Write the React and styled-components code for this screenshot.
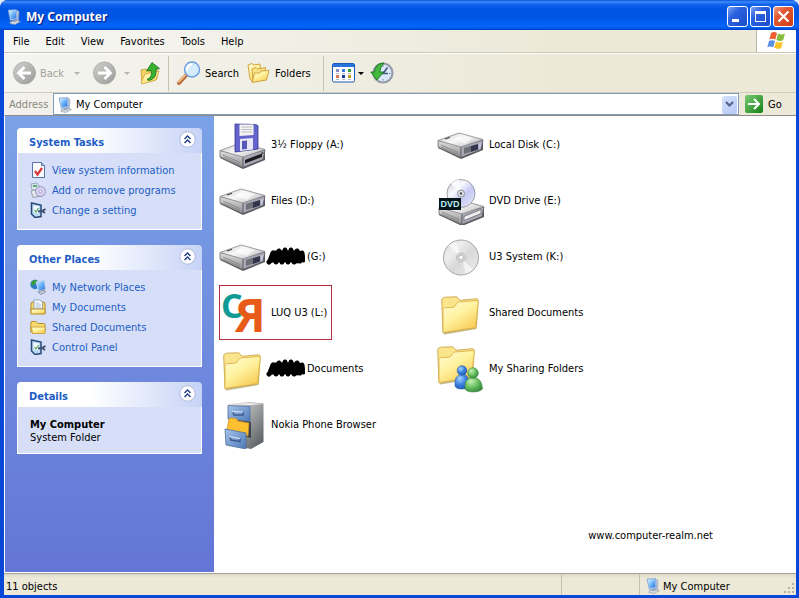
import React from "react";
import styled, { createGlobalStyle } from "styled-components";

const GlobalStyle = createGlobalStyle`
  * {
    box-sizing: border-box;
  }
  body {
    margin: 0;
    background: #e4ecf8;
    color: #000;
    font-family: "DejaVu Sans Condensed", "Noto Sans", Tahoma, sans-serif;
    font-size: 11px;
    line-height: 13px;
  }
  button, input {
    font: inherit;
    color: inherit;
    border: 0;
    padding: 0;
    margin: 0;
    background: none;
  }
  svg {
    display: block;
    flex: none;
  }
`;

const Window = styled.div`
  display: flex;
  flex-direction: column;
  min-height: 100vh;
  background: #0848d8;
  border-radius: 8px 8px 0 0;
  overflow: hidden;
`;

const TitleBar = styled.header`
  display: flex;
  align-items: center;
  gap: 4px;
  height: 30px;
  padding: 3px 5px 0 6px;
  background: linear-gradient(
    #0a52d8 0%,
    #3c8cf8 6%,
    #1264ee 14%,
    #0054e2 30%,
    #0056e6 60%,
    #0464fa 86%,
    #0260f4 92%,
    #0040c0 100%
  );
`;

const Title = styled.h1`
  flex: 1;
  margin: 0;
  color: #fff;
  font-family: "Noto Sans", sans-serif;
  font-size: 12px;
  line-height: 18px;
  font-weight: 700;
  text-shadow: 1px 1px 1px #0a1883;
`;

const WindowButtons = styled.div`
  display: flex;
  gap: 2px;
`;

const WindowButton = styled.button`
  width: 21px;
  height: 21px;
  border: 1px solid #fff;
  border-radius: 3px;
  background: ${({ $close }) =>
    $close
      ? "linear-gradient(135deg, #f0a088, #e25a34 35%, #cc3c14)"
      : "linear-gradient(135deg, #7ca4f4, #2c62e0 35%, #1a4cc8)"};
`;

const Frame = styled.div`
  flex: 1;
  display: flex;
  flex-direction: column;
  margin: 0 3px 3px 4px;
  background: #ece9d8;
`;

const MenuBar = styled.nav`
  display: flex;
  height: 23px;
  border-bottom: 1px solid #c9c6b6;
  background: linear-gradient(90deg, #f6f6f4, #ece9d8 70%);
`;

const MenuItem = styled.button`
  padding: 0 8px;
  &:first-child {
    padding-left: 9px;
  }
`;

const Flag = styled.div`
  display: flex;
  align-items: center;
  justify-content: center;
  width: 40px;
  margin-left: auto;
  border-left: 1px solid #b8b5a4;
  background: #fff;
`;

const ToolBar = styled.div`
  display: flex;
  align-items: center;
  height: 40px;
  padding-left: 8px;
  border-top: 1px solid #fff;
  border-bottom: 1px solid #cfccbc;
  background: linear-gradient(90deg, #f4f4f0, #ece9d8 70%);
`;

const ToolButton = styled.button`
  display: flex;
  align-items: center;
  gap: 4px;
  padding-right: ${({ $pad }) => $pad || 0}px;
  color: ${({ disabled }) => (disabled ? "#a3a19a" : "#000")};
`;

const Arrow = styled.span`
  border: 3px solid transparent;
  border-top-color: ${({ $dim }) => ($dim ? "#b6b4aa" : "#000")};
  border-bottom: 0;
  margin-left: ${({ $gap }) => $gap || 4}px;
`;

const Divider = styled.span`
  width: 1px;
  height: 35px;
  margin: 0 8px 0 6px;
  background: #c5c2b2;
`;

const AddressBar = styled.div`
  display: flex;
  align-items: center;
  height: 22px;
  padding-left: 5px;
  background: linear-gradient(90deg, #f2f1ec, #ece9d8 70%);
`;

const AddressLabel = styled.label`
  width: 44px;
  color: #8a887c;
`;

const AddressField = styled.div`
  flex: 1;
  display: flex;
  align-items: center;
  gap: 3px;
  height: 22px;
  padding: 1px 1px 0 3px;
  border: 1px solid #7f9db9;
  background: #fff;
`;

const AddressInput = styled.input`
  flex: 1;
  min-width: 0;
  outline: 0;
`;

const DropButton = styled.button`
  display: flex;
  align-items: center;
  justify-content: center;
  width: 15px;
  height: 18px;
  border-radius: 2px;
  background: linear-gradient(135deg, #d6e2fc, #b4c8f4);
`;

const GoButton = styled.button`
  display: flex;
  align-items: center;
  gap: 5px;
  width: 57px;
  padding-left: 6px;
`;

const Content = styled.div`
  flex: 1;
  display: flex;
  border-top: 1px solid #8c8b85;
  border-left: 1px solid #fff;
  border-bottom: 1px solid #fff;
  background: #fff;
`;

const Sidebar = styled.aside`
  display: flex;
  flex-direction: column;
  gap: 15px;
  width: 209px;
  padding: 12px;
  background: linear-gradient(#7ba2e7, #6375d6);
`;

const PanelHead = styled.div`
  display: flex;
  align-items: center;
  justify-content: space-between;
  height: 25px;
  padding: 0 6px 0 12px;
  border-radius: 4px 4px 0 0;
  background: linear-gradient(90deg, #fff 40%, #c6d3f7);
`;

const PanelTitle = styled.h2`
  margin: 3px 0 0;
  color: #215dc6;
  font-size: 11px;
  font-weight: 700;
`;

const PanelToggle = styled.button`
  margin-bottom: 2px;
`;

const PanelBody = styled.div`
  padding: ${({ $text }) => ($text ? "11px 12px 9px" : "7px 12px 9px")};
  border: 1px solid #fff;
  border-top: 0;
  background: #d6dff7;
`;

const TaskLink = styled.a`
  display: flex;
  align-items: center;
  gap: 6px;
  height: 20px;
  color: #215dc6;
  text-decoration: none;
`;

const Files = styled.main`
  flex: 1;
  display: flex;
  flex-direction: column;
  padding-left: 5px;
`;

const Grid = styled.div`
  display: grid;
  grid-template-columns: repeat(auto-fill, 218px);
  grid-auto-rows: 56px;
  max-width: 436px;
  align-items: center;
`;

const Item = styled.div`
  display: flex;
  align-items: center;
  justify-self: start;
  gap: 4px;
  height: 55px;
  padding: 1px 4px 0 0;
  border: 1px solid ${({ $marked }) => ($marked ? "#b42c3c" : "transparent")};
  border-left-width: 0;
  box-shadow: ${({ $marked }) => ($marked ? "inset 1px 0 #b42c3c" : "none")};
`;

const ItemName = styled.span`
  display: flex;
  align-items: center;
  gap: 2px;
  margin-left: ${({ $masked }) => ($masked ? "-6px" : "0")};
`;

const Site = styled.p`
  align-self: flex-end;
  margin: auto 83px 30px 0;
`;

const StatusBar = styled.footer`
  display: flex;
  height: 22px;
  border-top: 1px solid #a5a395;
  background: linear-gradient(#dcd9c9, #ece9d8 4px);
`;

const StatusCell = styled.div`
  display: flex;
  align-items: center;
  gap: 2px;
  flex: ${({ $width }) => ($width ? `0 0 ${$width}px` : 1)};
  padding-top: 3px;
  padding-left: ${({ $width }) => ($width ? 5 : 2)}px;
  border-left: ${({ $width }) => ($width ? "1px solid #c5c2b2" : "0")};
`;

const Grip = styled.svg`
  margin: auto 1px 1px auto;
`;

const HiddenDefs = styled.svg`
  position: absolute;
`;

const LogoSvg = styled.svg`
  overflow: visible;
  font-family: "Open Sans", sans-serif;
  font-weight: 700;
`;

const Defs = () => (
  <HiddenDefs width="0" height="0" aria-hidden="true">
    <defs>
      <linearGradient id="folder" x1="0" y1="0" x2="0.7" y2="1">
        <stop offset="0" stopColor="#fffcd8" />
        <stop offset="0.5" stopColor="#fff2a0" />
        <stop offset="1" stopColor="#f8cc54" />
      </linearGradient>
      <linearGradient id="metal" x1="0" y1="0" x2="1" y2="0.6">
        <stop offset="0" stopColor="#c4c4c4" />
        <stop offset="0.5" stopColor="#f8f8f8" />
        <stop offset="1" stopColor="#c8c8cc" />
      </linearGradient>
      <linearGradient id="side" x1="0" y1="0" x2="0" y2="1">
        <stop offset="0" stopColor="#e0e0e0" />
        <stop offset="1" stopColor="#8e8e90" />
      </linearGradient>
      <linearGradient id="screen" x1="0" y1="0" x2="1" y2="1">
        <stop offset="0" stopColor="#d8f0ff" />
        <stop offset="0.5" stopColor="#6cb4f8" />
        <stop offset="1" stopColor="#2468d8" />
      </linearGradient>
      <linearGradient id="disc" x1="0" y1="0" x2="1" y2="1">
        <stop offset="0" stopColor="#cfd0d8" />
        <stop offset="0.35" stopColor="#f8f8ff" />
        <stop offset="0.6" stopColor="#c4c8f4" />
        <stop offset="1" stopColor="#ececf4" />
      </linearGradient>
      <linearGradient id="silver" x1="0" y1="0" x2="1" y2="1">
        <stop offset="0" stopColor="#d8d8d8" />
        <stop offset="0.3" stopColor="#eeeeee" />
        <stop offset="0.55" stopColor="#d8d8d8" />
        <stop offset="1" stopColor="#f0f0f0" />
      </linearGradient>
      <linearGradient id="drawer" x1="0" y1="0" x2="1" y2="1">
        <stop offset="0" stopColor="#a8c4ea" />
        <stop offset="1" stopColor="#4c78b8" />
      </linearGradient>
      <linearGradient id="tower" x1="0" y1="0" x2="1" y2="1">
        <stop offset="0" stopColor="#e8e8e8" />
        <stop offset="1" stopColor="#505458" />
      </linearGradient>
      <linearGradient id="round" x1="0" y1="0" x2="1" y2="1">
        <stop offset="0" stopColor="#d0d0ce" />
        <stop offset="1" stopColor="#9a9a98" />
      </linearGradient>
      <linearGradient id="green" x1="0" y1="0" x2="1" y2="1">
        <stop offset="0" stopColor="#7ccc74" />
        <stop offset="1" stopColor="#128018" />
      </linearGradient>
      <radialGradient id="blueMan" cx="0.35" cy="0.3" r="0.8">
        <stop offset="0" stopColor="#a8d4ff" />
        <stop offset="0.5" stopColor="#3c84e0" />
        <stop offset="1" stopColor="#1a50b0" />
      </radialGradient>
      <radialGradient id="greenMan" cx="0.35" cy="0.3" r="0.8">
        <stop offset="0" stopColor="#c8f0b8" />
        <stop offset="0.5" stopColor="#68c060" />
        <stop offset="1" stopColor="#308038" />
      </radialGradient>
    </defs>
  </HiddenDefs>
);

const ComputerIcon = () => (
  <svg width="16" height="16" viewBox="0 0 16 16">
    <path d="M4 13l6-2 4.500 1.500-5.500 3-5-1z" fill="#d4d8e0" stroke="#8c94a4" strokeWidth="0.6" />
    <path d="M10 1l3 1.200-0.500 9-2 1z" fill="#c4ccdc" stroke="#8090b0" strokeWidth="0.5" />
    <path d="M2 1l8.500-0.500 0.800 9.500-7 1.500z" fill="#b8d4f4" stroke="#6890cc" strokeWidth="0.6" />
    <path d="M3 2l6.700-0.400 0.700 7.400-5.400 1.200z" fill="url(#screen)" />
    <path d="M6.500 11.500l3-0.500 0.600 2H7z" fill="#98a4b8" />
  </svg>
);

const FlagIcon = () => (
  <svg width="22" height="20" viewBox="0 0 22 20">
    <path d="M5 2q3-2 6 0l-1.6 6.6q-3-1.600-6 0z" fill="#ee6030" />
    <path d="M12 2.500q3.500 2 7 0l-1.800 6.600q-3.500 1.800-6.800-0.200z" fill="#84bc3c" />
    <path d="M3 10q3-1.600 6 0l-1.700 6.300q-3-1.800-6 0z" fill="#5a90e4" />
    <path d="M10 10.400q3.400 2 6.900 0.200l-1.700 6.400q-3.500 1.800-6.900-0.200z" fill="#f8c428" />
  </svg>
);

const RoundArrow = ({ flip }) => (
  <svg width="24" height="24" viewBox="0 0 24 24">
    <circle cx="12.500" cy="12" r="11" fill="url(#round)" stroke="#a4a4a2" strokeWidth="0.800" />
    <path
      d={flip ? "M6 12h12M12.500 6l6 6-6 6" : "M19 12H7M12.500 6L6.500 12l6 6"}
      fill="none"
      stroke="#fff"
      strokeWidth="2.800"
    />
  </svg>
);

const UpIcon = () => (
  <svg width="22" height="24" viewBox="0 0 22 24">
    <path d="M1 9l5-1 2 2 9-2v10L2 22z" fill="#f4d468" stroke="#c89828" strokeWidth="0.800" />
    <path d="M1 22l4-9 14-3-3 9-14 4z" fill="url(#folder)" stroke="#d0a030" strokeWidth="0.800" />
    <path
      d="M7 18.500q6-2.500 4-9l-4.500 0.500L12 1.500l7.500 6-3.500 0.800q1 9.500-7 11.200z"
      fill="#38b030"
      stroke="#14701a"
      strokeWidth="0.800"
    />
  </svg>
);

const SearchIcon = () => (
  <svg width="24" height="24" viewBox="0 0 24 24">
    <path d="M2 22l7-7.500" stroke="#b86c38" strokeWidth="4" strokeLinecap="round" />
    <path d="M1.800 20.800l6.600-7" stroke="#f8b888" strokeWidth="1.800" strokeLinecap="round" />
    <circle cx="15" cy="8.500" r="7.500" fill="#d4ecfc" stroke="#6c9ce0" strokeWidth="1.400" />
    <path d="M10 9a5 5 0 0 1 5-5.500" stroke="#fff" strokeWidth="2.400" fill="none" />
  </svg>
);

const FoldersIcon = () => (
  <svg width="24" height="22" viewBox="0 0 24 22">
    <path d="M1 3l4-1.500 2 1.500 6-1 1 11-9 6-2-2z" fill="url(#folder)" stroke="#cc9c30" strokeWidth="0.900" />
    <path d="M5 7l4-1.500 1.500 1.500 8-1.500-1 10L6 20z" fill="#fbe488" stroke="#cc9c30" strokeWidth="0.900" />
    <path d="M5 20.500l2.500-9.500 5 0 1.500-2 8-0.500-2.500 9.500z" fill="url(#folder)" stroke="#cc9c30" strokeWidth="0.900" />
  </svg>
);

const ViewsIcon = () => (
  <svg width="24" height="20" viewBox="0 0 24 20">
    <rect x="0.500" y="0.500" width="22" height="18.500" rx="1.500" fill="#fff" stroke="#1c5cb8" />
    <path d="M1 1h21v3H1z" fill="#2874dc" />
    <path d="M4 6h3v3H4z" fill="#8c8cc4" />
    <path d="M10 6h3v3h-3z" fill="#3c78dc" />
    <path d="M16 6h3v3h-3z" fill="#30a030" />
    <path d="M4 12h3v3H4z" fill="#e07858" />
    <path d="M10 12h3v3h-3z" fill="#1c389c" />
    <path d="M16 12h3v3h-3z" fill="#c8a020" />
    <path d="M4 10.500h3m3 0h3m3 0h3M4 16.500h3m3 0h3m3 0h3" stroke="#a4acbc" strokeWidth="0.800" />
  </svg>
);

const HistoryIcon = () => (
  <svg width="24" height="24" viewBox="0 0 24 24">
    <circle cx="13" cy="12" r="9.500" fill="#dce8f8" stroke="#949ca8" strokeWidth="2.200" />
    <path d="M13 12.500l4.500-6M12 12.500h6" stroke="#40587c" strokeWidth="1.600" />
    <path d="M13 4.500V6M13 18v1.500M19 12.500h1.500" stroke="#6c84a8" />
    <path
      d="M14 2Q5 2.500 4.500 11H0.800l6 8 7-8h-4Q10 6 14 2z"
      fill="#44b83c"
      stroke="#187020"
      strokeWidth="0.900"
    />
  </svg>
);

const GoIcon = () => (
  <svg width="18" height="18" viewBox="0 0 18 18">
    <rect width="18" height="18" rx="2" fill="url(#green)" />
    <path d="M3 9h10M9 4l5 5-5 5" fill="none" stroke="#fff" strokeWidth="2" />
  </svg>
);

const CollapseIcon = () => (
  <svg width="17" height="17" viewBox="0 0 17 17">
    <circle cx="8.500" cy="8.500" r="7.700" fill="#fff" stroke="#b0b8d8" />
    <path d="M5.500 8l3-3 3 3M5.500 12l3-3 3 3" fill="none" stroke="#1c3c80" strokeWidth="1.400" />
  </svg>
);

const InfoIcon = () => (
  <svg width="16" height="16" viewBox="0 0 16 16">
    <path d="M2.500 0.500h9l3 3v12h-12z" fill="#f8fafe" stroke="#5874a4" />
    <path d="M11.500 0.500v3h3" fill="#b8c8e4" stroke="#5874a4" />
    <path d="M5 9l2.500 3.500L12 6" fill="none" stroke="#dc3838" strokeWidth="2.200" />
  </svg>
);

const ProgramsIcon = () => (
  <svg width="16" height="16" viewBox="0 0 16 16">
    <path d="M1 2l6-1 2 3v4H2z" fill="#dce8f0" stroke="#8098b0" strokeWidth="0.800" />
    <path d="M3 3h4v2H3z" fill="#58a870" />
    <path d="M1 9l8-2 2 7-8 1.500z" fill="#e4e8e8" stroke="#88909c" strokeWidth="0.800" />
    <circle cx="10.500" cy="9.500" r="5" fill="#d8d0f0" stroke="#8c84b8" strokeWidth="0.800" />
    <circle cx="10.500" cy="9.500" r="1.400" fill="#fff" stroke="#8c84b8" strokeWidth="0.700" />
  </svg>
);

const SettingIcon = () => (
  <svg width="16" height="16" viewBox="0 0 16 16">
    <path d="M1.500 1l9.500 2v11.500L5 15.500 1.500 12z" fill="#b8d8f4" stroke="#284878" strokeWidth="1.500" />
    <path d="M3.500 3.500l5.500 1v7l-5.500-1z" fill="#f4fafe" />
    <path d="M4.500 8l1.500 2 2.500-4" stroke="#58a858" strokeWidth="1.200" fill="none" />
    <path d="M8 9.500l4-0.500 3.500-2M12 9l3 2" stroke="#405070" strokeWidth="2" fill="none" />
  </svg>
);

const NetworkIcon = () => (
  <svg width="16" height="16" viewBox="0 0 16 16">
    <circle cx="5" cy="5.500" r="4.700" fill="#2c7cc8" />
    <path d="M1 4q3-4.500 6-3l-2 4-3 2z" fill="#38a034" />
    <path d="M6 3l8.500-1.500 1 9-7 1.500z" fill="url(#screen)" stroke="#c4d4ec" strokeWidth="0.900" />
    <path d="M8 13l6-2 1.500 2-4.500 2.500z" fill="#c8ccd8" stroke="#707888" strokeWidth="0.700" />
  </svg>
);

const DocsIcon = () => (
  <svg width="16" height="16" viewBox="0 0 16 16">
    <path d="M1 5q0-2 2-2h10q2 0 2 2v9H1z" fill="#f8d868" stroke="#b88c28" />
    <path d="M4 1h6l2.500 2.500V10H4z" fill="#fff" stroke="#7890b8" strokeWidth="0.800" />
    <path d="M5.500 4h4m-4 2h5.500m-5.500 2h5.500" stroke="#88a4cc" strokeWidth="0.800" />
    <path d="M1 10h14v5H1z" fill="url(#folder)" stroke="#b88c28" />
  </svg>
);

const SmallFolderIcon = () => (
  <svg width="16" height="16" viewBox="0 0 16 16">
    <path d="M0.800 13V4q0-1.500 1.200-1.500h4l2 2h5.500q1.500 0 1.500 1.500v7z" fill="#f8dc70" stroke="#b88c28" />
    <path d="M2.500 14.500L1.500 8h13.500v6.500z" fill="url(#folder)" stroke="#c89830" strokeWidth="0.800" />
  </svg>
);

const DriveBody = () => (
  <g>
    <path d="M1 20v7l23 11 22-9v-8z" fill="#58585c" />
    <path d="M1 19.500v6.500l23 10.500V25z" fill="url(#side)" stroke="#707074" strokeWidth="0.800" />
    <path d="M24 25v11.500l20-8 2-9.500z" fill="#a8a8b4" stroke="#5c5c64" strokeWidth="0.800" />
    <path d="M1 19.500L22 12l24 6.500L24 26z" fill="url(#metal)" stroke="#88888c" strokeWidth="0.800" />
    <path d="M4 24l17 7.500M4 26l17 7.500" stroke="#78787c" strokeWidth="0.700" />
  </g>
);

const DriveIcon = () => (
  <svg width="48" height="48" viewBox="0 0 48 48">
    <DriveBody />
    <path d="M16 18q9-4 20-1l-8 6z" fill="#fff" opacity="0.600" />
    <path d="M8 18l5-1.800" stroke="#48484c" strokeWidth="1.200" />
    <path d="M27 27l7-2.200v6L27 33z" fill="#707078" />
    <path d="M34 25l7-2v5.500L34 31z" fill="#34344c" />
    <path d="M42 22.500l2.500-1-1 6-1.500 0.500z" fill="#c4c4e4" />
  </svg>
);

const FloppyIcon = () => (
  <svg width="48" height="48" viewBox="0 0 48 48">
    <g transform="translate(0 10)">
      <DriveBody />
      <path d="M26 29l17-6.500v3.500l-17 6.500z" fill="#1c1c20" />
      <circle cx="43.500" cy="22" r="1" fill="#444" />
    </g>
    <path d="M16 3l21.500 0.500 1.500 1.500v23l-23 3z" fill="#6464cc" stroke="#34348c" strokeWidth="0.800" />
    <path d="M20.500 3.500h14v10.500l-14 1z" fill="#f4f4f4" />
    <path d="M22.500 6h10.500m-10.500 2.500h10.500m-10.500 2.500h10.500" stroke="#b4b4bc" strokeWidth="0.900" />
    <path d="M21 18l13-1v11.500L21 30z" fill="#e8e8f8" />
    <path d="M23 20l5-0.500v8.500l-5 0.500z" fill="#5858b8" />
  </svg>
);

const DvdIcon = () => (
  <svg width="48" height="48" viewBox="0 0 48 48">
    <g transform="translate(1 11)">
      <DriveBody />
      <path d="M26 28.500l17-7v4l-17 7z" fill="#f0f0f0" stroke="#606064" strokeWidth="0.700" />
    </g>
    <circle cx="24" cy="16.500" r="14" fill="url(#disc)" stroke="#8c8c94" strokeWidth="0.800" />
    <path d="M24 16.500L14 6.500a14 14 0 0 1 8-4z" fill="#fff" opacity="0.800" />
    <circle cx="24" cy="16.500" r="3.500" fill="#e4e4e8" stroke="#7c7c84" strokeWidth="0.800" />
    <circle cx="24" cy="16.500" r="1.300" fill="#505058" />
    <rect x="2" y="21" width="22" height="12" fill="#041418" />
    <text x="13" y="30" textAnchor="middle" fontSize="9" fontWeight="700" fill="#b4ecf0" fontFamily="Liberation Sans, sans-serif">
      DVD
    </text>
  </svg>
);

const DiscIcon = () => (
  <svg width="48" height="48" viewBox="0 0 48 48">
    <circle cx="24" cy="24.500" r="17.500" fill="url(#silver)" stroke="#a4a4a4" />
    <path d="M24 24.500L12 12.500a17 17 0 0 1 7-4zM24 24.500l12 12a17 17 0 0 1-7 4z" fill="#fff" opacity="0.600" />
    <circle cx="24" cy="24.500" r="4.500" fill="#d8d8d8" stroke="#bcbcbc" />
    <circle cx="24" cy="24.500" r="2.300" fill="#fff" stroke="#a4a4a4" strokeWidth="0.800" />
  </svg>
);

const FolderShape = () => (
  <g>
    <path d="M6 44l1.500 1.500L39.500 40 42 14l-2 24z" fill="#a89858" opacity="0.700" />
    <path d="M6 43.500L4.700 11q0-1.500 1.300-2l1.500-0.800 11.500-0.400q1.200 0 2 1l2 2.500 16.500-1.600q1.800 0 1.700 2l-2 27z" fill="#fae48c" stroke="#cca850" strokeWidth="0.900" />
    <path d="M6 43.500l0-23q0-1.500 1.500-1.700l8.500-0.600q1.200 0 2-1.200l2-3q0.600-0.900 1.700-1l18.300-1.500q1.500 0 1.300 1.500L38.500 38.500z" fill="url(#folder)" stroke="#dcb44c" strokeWidth="0.900" />
  </g>
);

const FolderIcon = () => (
  <svg width="48" height="48" viewBox="0 0 48 48">
    <FolderShape />
  </svg>
);

const SharingIcon = () => (
  <svg width="48" height="48" viewBox="0 0 48 48">
    <g transform="translate(-4 -6)">
      <FolderShape />
    </g>
    <path d="M18 41q-1-11 7-12 7 0 7 10 0 5-7 5-6 0-7-3z" fill="url(#blueMan)" stroke="#2458a8" strokeWidth="0.600" />
    <circle cx="25" cy="25.500" r="4.800" fill="url(#blueMan)" stroke="#2458a8" strokeWidth="0.600" />
    <path d="M28 44q-1-11 8-12 9 1 9.500 12-3 3-9 3-7 0-8.500-3z" fill="url(#greenMan)" stroke="#3c8840" strokeWidth="0.600" />
    <circle cx="36" cy="28" r="5.300" fill="url(#greenMan)" stroke="#3c8840" strokeWidth="0.600" />
  </svg>
);

const NokiaIcon = () => (
  <svg width="48" height="48" viewBox="0 0 48 48">
    <path d="M9 3l21-2 14.500 1.500V41L32 48 12 44z" fill="url(#tower)" />
    <path d="M10 3l20-1 14 1-12 1z" fill="#f0f0f0" />
    <path d="M9 4.500l22 1V21L9 18z" fill="url(#drawer)" stroke="#50709c" strokeWidth="0.800" />
    <path d="M10 18l22 3v16l-22-6z" fill="#3c4450" />
    <path d="M8 29l2-11q0-1 2-1l5 0.500 2 2.500 11 2-1 13z" fill="#fcc030" stroke="#d09018" strokeWidth="0.700" />
    <path d="M6 28l21 4v16L7 44z" fill="url(#drawer)" stroke="#50709c" strokeWidth="0.800" />
    <path d="M14 11l1 3h9v-3M11 36l1 3 9 1.500v-3" fill="none" stroke="#3c5c90" strokeWidth="1.500" />
    <path d="M13 10.500l11 0.500M10 35.500l11 2" stroke="#d8e8fc" strokeWidth="1.200" />
  </svg>
);

const LogoIcon = () => (
  <LogoSvg width="48" height="48" viewBox="0 0 48 48">
    <text x="2" y="29" fontSize="34" fill="#0f9a94">
      C
    </text>
    <text x="16" y="43" fontSize="46" fill="#e85a18">
      Я
    </text>
  </LogoSvg>
);

const Scribble = () => (
  <svg width="40" height="20" viewBox="0 0 40 20">
    <path
      d="M5 14l3-8 3 9 3-11 3 11 3-12 3 12 3-12 3 12 3-11 3 10 2-8 1 7M4 15l4-4 26-5M8 6l24 8M8 13h28M10 9h26M9 6h22"
      fill="none"
      stroke="#000"
      strokeWidth="5"
      strokeLinejoin="round"
      strokeLinecap="round"
    />
  </svg>
);

const menus = ["File", "Edit", "View", "Favorites", "Tools", "Help"];

const systemTasks = [
  { label: "View system information", icon: <InfoIcon /> },
  { label: "Add or remove programs", icon: <ProgramsIcon /> },
  { label: "Change a setting", icon: <SettingIcon /> },
];

const places = [
  { label: "My Network Places", icon: <NetworkIcon /> },
  { label: "My Documents", icon: <DocsIcon /> },
  { label: "Shared Documents", icon: <SmallFolderIcon /> },
  { label: "Control Panel", icon: <SettingIcon /> },
];

const items = [
  { name: "3½ Floppy (A:)", icon: <FloppyIcon /> },
  { name: "Local Disk (C:)", icon: <DriveIcon /> },
  { name: "Files (D:)", icon: <DriveIcon /> },
  { name: "DVD Drive (E:)", icon: <DvdIcon /> },
  { name: "(G:)", icon: <DriveIcon />, masked: true },
  { name: "U3 System (K:)", icon: <DiscIcon /> },
  { name: "LUQ U3 (L:)", icon: <LogoIcon />, marked: true },
  { name: "Shared Documents", icon: <FolderIcon /> },
  { name: "Documents", icon: <FolderIcon />, masked: true },
  { name: "My Sharing Folders", icon: <SharingIcon /> },
  { name: "Nokia Phone Browser", icon: <NokiaIcon /> },
];

const Panel = ({ title, text, children }) => (
  <section>
    <PanelHead>
      <PanelTitle>{title}</PanelTitle>
      <PanelToggle aria-label={`Collapse ${title}`}>
        <CollapseIcon />
      </PanelToggle>
    </PanelHead>
    <PanelBody $text={text}>{children}</PanelBody>
  </section>
);

const Tasks = ({ list }) =>
  list.map((task) => (
    <TaskLink href="#" key={task.label}>
      {task.icon}
      {task.label}
    </TaskLink>
  ));

const App = () => {
  return (
    <Window>
      <GlobalStyle />
      <Defs />
      <TitleBar>
        <ComputerIcon />
        <Title>My Computer</Title>
        <WindowButtons>
          <WindowButton aria-label="Minimize">
            <svg width="19" height="19" viewBox="0 0 19 19">
              <path d="M4 12h7v3H4z" fill="#fff" />
            </svg>
          </WindowButton>
          <WindowButton aria-label="Maximize">
            <svg width="19" height="19" viewBox="0 0 19 19">
              <path d="M4 4h11v11H4zM5 7v7h9V7z" fill="#fff" fillRule="evenodd" />
            </svg>
          </WindowButton>
          <WindowButton $close aria-label="Close">
            <svg width="19" height="19" viewBox="0 0 19 19">
              <path d="M4.500 4.500l10 10m0-10l-10 10" stroke="#fff" strokeWidth="2.200" />
            </svg>
          </WindowButton>
        </WindowButtons>
      </TitleBar>
      <Frame>
        <MenuBar>
          {menus.map((menu) => (
            <MenuItem key={menu}>{menu}</MenuItem>
          ))}
          <Flag>
            <FlagIcon />
          </Flag>
        </MenuBar>
        <ToolBar>
          <ToolButton disabled $pad={12}>
            <RoundArrow />
            Back
            <Arrow $dim $gap={6} />
          </ToolButton>
          <ToolButton disabled aria-label="Forward" $pad={10}>
            <RoundArrow flip />
            <Arrow $dim $gap={4} />
          </ToolButton>
          <ToolButton aria-label="Up">
            <UpIcon />
          </ToolButton>
          <Divider />
          <ToolButton $pad={8}>
            <SearchIcon />
            Search
          </ToolButton>
          <ToolButton $pad={6}>
            <FoldersIcon />
            Folders
          </ToolButton>
          <Divider />
          <ToolButton aria-label="Views" $pad={6}>
            <ViewsIcon />
            <Arrow $gap={-2} />
          </ToolButton>
          <ToolButton aria-label="History">
            <HistoryIcon />
          </ToolButton>
        </ToolBar>
        <AddressBar>
          <AddressLabel htmlFor="address">Address</AddressLabel>
          <AddressField>
            <ComputerIcon />
            <AddressInput id="address" type="text" defaultValue="My Computer" />
            <DropButton aria-label="Show addresses">
              <svg width="9" height="7" viewBox="0 0 9 7">
                <path d="M1 1l3.500 3.500L8 1" fill="none" stroke="#4d6185" strokeWidth="2" />
              </svg>
            </DropButton>
          </AddressField>
          <GoButton>
            <GoIcon />
            Go
          </GoButton>
        </AddressBar>
        <Content>
          <Sidebar>
            <Panel title="System Tasks">
              <Tasks list={systemTasks} />
            </Panel>
            <Panel title="Other Places">
              <Tasks list={places} />
            </Panel>
            <Panel title="Details" text>
              <strong>My Computer</strong>
              <div>System Folder</div>
            </Panel>
          </Sidebar>
          <Files>
            <Grid>
              {items.map((item) => (
                <Item key={item.name} $marked={item.marked}>
                  {item.icon}
                  <ItemName $masked={item.masked}>
                    {item.masked && <Scribble />}
                    {item.name}
                  </ItemName>
                </Item>
              ))}
            </Grid>
            <Site>www.computer-realm.net</Site>
          </Files>
        </Content>
        <StatusBar>
          <StatusCell>11 objects</StatusCell>
          <StatusCell $width={78} />
          <StatusCell $width={157}>
            <ComputerIcon />
            My Computer
            <Grip width="12" height="12" viewBox="0 0 12 12">
              <path d="M9 1h2v2H9zM5 5h2v2H5zM9 5h2v2H9zM1 9h2v2H1zM5 9h2v2H5zM9 9h2v2H9z" fill="#b8b4a2" />
            </Grip>
          </StatusCell>
        </StatusBar>
      </Frame>
    </Window>
  );
};

export default App;
